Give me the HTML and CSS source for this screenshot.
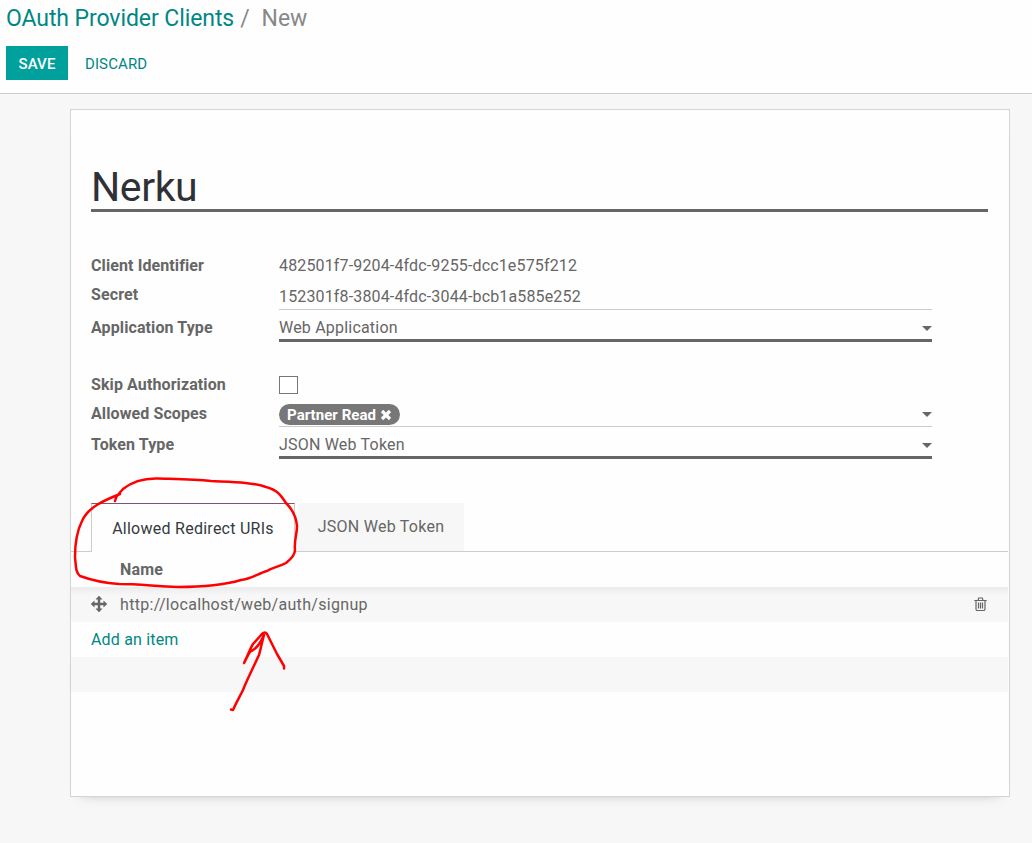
FILE: index.html
```
<!DOCTYPE html>
<html lang="en">
<head>
<meta charset="utf-8">
<title>OAuth Provider Clients</title>
<link rel="stylesheet" href="styles.css">
</head>
<body>
<header class="control-panel">
  <nav class="breadcrumb"><a class="crumb">OAuth Provider Clients</a><span class="slash">/</span><span class="current">New</span></nav>
  <div class="actions"><button class="btn save">SAVE</button><button class="btn discard">DISCARD</button></div>
</header>
<main class="content">
  <section class="sheet">
    <h1 class="title"><span>Nerku</span></h1>
    <div class="group">
      <div class="row r-client"><label>Client Identifier</label><div class="value code"><span>482501f7-9204-4fdc-9255-dcc1e575f212</span></div></div>
      <div class="row r-secret"><label>Secret</label><div class="value thin code"><span>152301f8-3804-4fdc-3044-bcb1a585e252</span></div></div>
      <div class="row r-select"><label>Application Type</label><div class="value thick"><span>Web Application</span><svg class="caret" viewBox="0 0 10 5"><path d="M0 0H10L5 5Z"/></svg></div></div>
    </div>
    <div class="group second">
      <div class="row r-check"><label>Skip Authorization</label><div class="value"><i class="checkbox"></i></div></div>
      <div class="row r-tags"><label>Allowed Scopes</label><div class="value thin"><span class="tag"><b>Partner Read</b><svg class="remove" viewBox="0 0 12 12"><path d="M2 2L10 10M10 2L2 10"/></svg></span><svg class="caret" viewBox="0 0 10 5"><path d="M0 0H10L5 5Z"/></svg></div></div>
      <div class="row r-select"><label>Token Type</label><div class="value thick"><span>JSON Web Token</span><svg class="caret" viewBox="0 0 10 5"><path d="M0 0H10L5 5Z"/></svg></div></div>
    </div>
    <div class="tabs"><div class="tab active"><span>Allowed Redirect URIs</span></div><div class="tab"><span>JSON Web Token</span></div></div>
    <div class="list">
      <div class="line head"><b>Name</b></div>
      <div class="line item">
        <svg class="move" viewBox="0 0 16 16"><path d="M8 0L11 3.3H9V7H12.7V5L16 8L12.7 11V9H9V12.7H11L8 16L5 12.7H7V9H3.3V11L0 8L3.3 5V7H7V3.3H5Z"/></svg>
        <span class="uri">http://localhost/web/auth/signup</span>
        <svg class="trash" viewBox="0 0 13 14"><path d="M.3 3.5H12.7M4 3.3L4.7 1H8.3L9 3.3M2 3.5V12Q2 13.5 3.2 13.5H9.8Q11 13.5 11 12V3.5M4.5 5.5V11.5M6.5 5.5V11.5M8.5 5.5V11.5"/></svg>
      </div>
      <div class="line"><a class="add">Add an item</a></div>
      <div class="line shaded"></div>
    </div>
  </section>
</main>
<svg class="marks" viewBox="0 0 1032 843">
  <path d="M115 501C116 497 118 494 120 494C105 500 88 507 82 521C76 533 75 544 75 557C76 568 76 573 80 576C91 580 104 583 119 584C139 584 153 586 178 587C198 587 224 585 241 580C251 579 259 573 267 571C273 567 279 567 286 563C291 559 295 555 295 550C294 540 297 535 297 526C296 514 291 508 286 503C280 494 277 490 266 487C252 482 232 482 211 481C194 479 175 479 158 478.500C143 478 133 481 123 489L116 497"/>
  <path d="M231 709.500L233 710C236 703 239 698 243 690C246 682 253 668 259 655C261 648 262 642 264 635C260 644 257 648 250 652C247 656 246 660 244 663C248 655 250 649 253 644L262 634Q265 631 267 634L277 654L284 666V668.500"/>
</svg>
</body>
</html>
```

FILE: styles.css
```
* { box-sizing: border-box; }
body { margin: 0; width: 1032px; height: 843px; display: flex; flex-direction: column; overflow: hidden; background: #f7f7f7; font: 16px/20px Roboto, sans-serif; color: #666; }
.control-panel { height: 94px; padding: 5px 6px 0; background: #fefefe; border-bottom: 1px solid #ccc; }
.breadcrumb { display: flex; height: 28px; font-size: 23px; line-height: 28px; letter-spacing: -.08px; color: #888; }
.crumb, .add { color: #008784; }
.slash { margin-left: 6px; }
.current { margin-left: 12px; }
.actions { display: flex; margin-top: 13px; }
.btn { height: 34px; border: 0; padding: 1px 0 0; font: 15px/20px Roboto, sans-serif; letter-spacing: .1px; }
.save { width: 62px; background: #00a09d; color: #fff; font-weight: 500; }
.discard { background: none; color: #008784; margin-left: 17px; }
.content { padding: 15px 22px 0 70px; }
.sheet { height: 688px; padding: 49px 0 0 20px; background: #fefefe; border: 1px solid #d4d4d4; box-shadow: 0 8px 12px -12px rgba(0, 0, 0, .35); }
.title { display: flex; width: 897px; height: 53px; margin: 0; border-bottom: 3px solid #666; font-size: 41px; line-height: 57px; letter-spacing: -.4px; font-weight: 400; color: #2f3136; }
.group { width: 841px; margin-top: 38px; }
.second { margin-top: 28px; }
.row { display: grid; grid-template-columns: 188px 653px; }
label { font-weight: 700; letter-spacing: .1px; }
.value { display: flex; align-items: center; letter-spacing: .2px; }
.code { letter-spacing: .15px; }
.r-client { height: 30px; }
.r-secret { height: 30px; }
.r-select { height: 32px; }
.r-check { height: 29px; }
.r-tags { height: 28px; }
.r-client label { padding-top: 6px; }
.r-check label, .r-tags label, .r-secret label { padding-top: 5px; }
.r-select label { padding-top: 8px; }
.thin { border-bottom: 1px solid #ccc; padding-top: 3px; }
.r-client .value { padding-top: 2px; }
.r-secret .value { padding-top: 5px; }
.thick { border-bottom: 3px solid #666; padding-top: 6px; }
.caret { width: 10px; height: 5px; margin-left: auto; fill: #666; }
.thick .caret { margin-top: 1px; }
.checkbox { width: 19px; height: 18px; border: 1px solid #777; background: #fff; }
.tag { display: flex; align-items: center; width: 121px; height: 21px; padding: 1px 0 0 8px; border-radius: 11px; background: #777; color: #fff; font-size: 15px; letter-spacing: .05px; }
.remove { width: 12px; height: 12px; margin-left: 4px; fill: none; stroke: #fff; stroke-width: 3.2; }
.tabs { display: flex; height: 49px; width: 937px; margin: 44px 0 0 -20px; padding-left: 20px; background: linear-gradient(#ccc, #ccc) bottom / 100% 1px no-repeat; letter-spacing: .26px; }
.tab { display: flex; align-items: center; justify-content: center; width: 166px; height: 48px; background: #f7f7f7; margin-left: 3px; }
.active { width: 204px; height: 49px; margin: 0; padding-top: 1px; border: solid #ccc; border-width: 1px 1px 0; border-top-color: #7c5576; background: #fefefe; color: #343a40; }
.list { width: 937px; margin-left: -20px; }
.line { display: flex; align-items: center; height: 35px; padding: 0 20px; }
.head { padding-left: 49px; letter-spacing: .2px; }
.item { background: linear-gradient(#ebebeb, #f7f7f7 8px); }
.shaded { background: #f7f7f7; }
.uri { margin-left: 13px; letter-spacing: .32px; }
.add { letter-spacing: .18px; }
.move { width: 16px; height: 16px; margin-top: -1px; fill: #666; stroke: #666; stroke-width: .5; }
.trash { width: 13px; height: 14px; margin-top: -1px; margin-left: auto; margin-right: 1px; fill: none; stroke: #666; stroke-width: 1.2; }
.marks { position: absolute; left: 0; top: 0; width: 1032px; height: 843px; fill: none; stroke: #f00; stroke-width: 2.5; stroke-linecap: round; stroke-linejoin: round; pointer-events: none; }
```
